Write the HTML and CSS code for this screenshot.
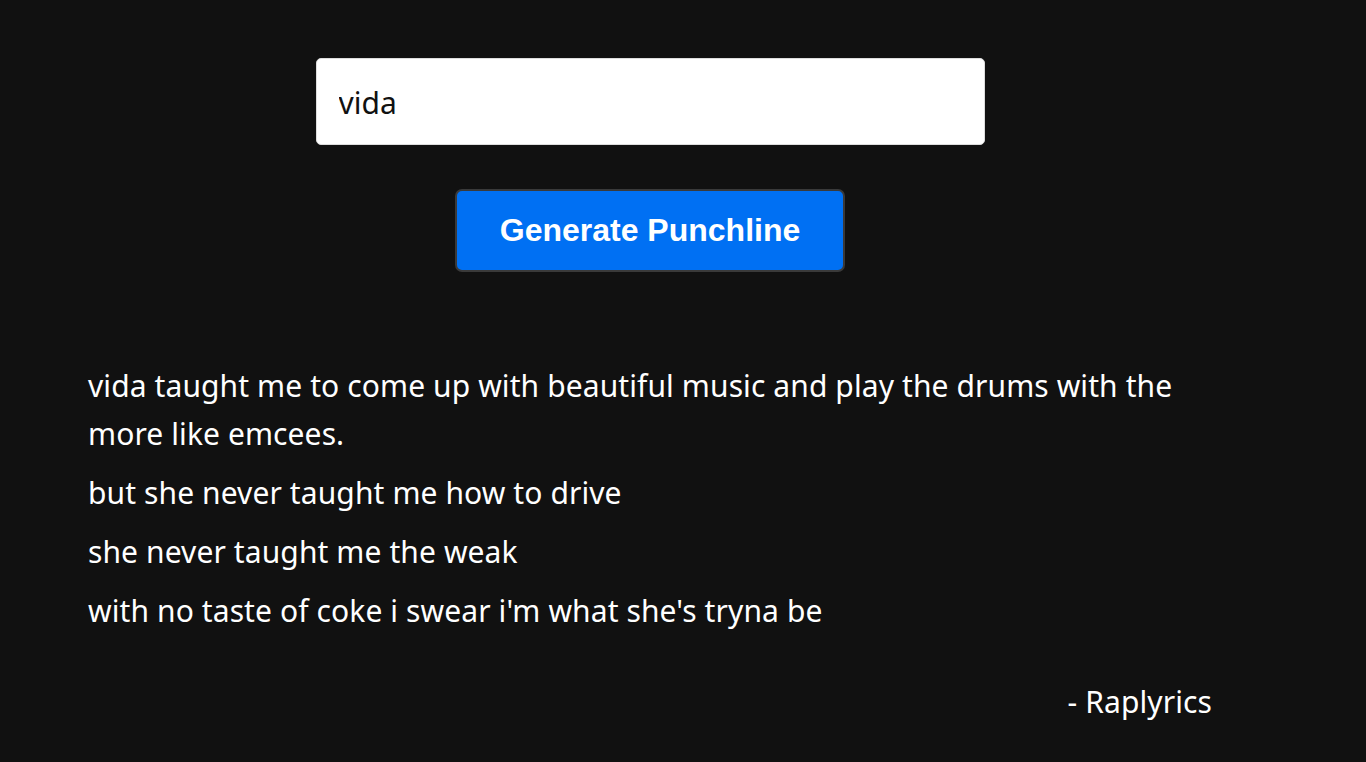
FILE: index.html
```html
<!DOCTYPE html>
<html lang="en">
<head>
<meta charset="utf-8">
<title>Punchline Generator</title>
<link rel="stylesheet" href="styles.css">
</head>
<body>
<main class="page">
  <form class="form">
    <input class="word-input" type="text" value="vida">
    <button class="generate-btn" type="button">Generate Punchline</button>
  </form>
  <section class="lyrics">
    <p class="line">vida taught me to come up with beautiful music and play the drums with the more like emcees.</p>
    <p class="line">but she never taught me how to drive</p>
    <p class="line">she never taught me the weak</p>
    <p class="line">with no taste of coke i swear i'm what she's tryna be</p>
    <p class="credit">- Raplyrics</p>
  </section>
</main>
</body>
</html>
```
FILE: styles.css
```css
html, body {
  margin: 0;
  padding: 0;
  background: #111111;
}
body {
  font-family: "Noto Sans", "Open Sans", sans-serif;
  color: #ffffff;
}
.page {
  width: 1124px;
  margin-left: 88px;
  padding-top: 58px;
}
.form {
  display: flex;
  flex-direction: column;
  align-items: center;
  gap: 44px;
  margin: 0;
}
.word-input {
  box-sizing: border-box;
  width: 669px;
  height: 87px;
  padding: 2px 22px 0 22px;
  border: 1px solid #dddddd;
  border-radius: 5px;
  background: #ffffff;
  color: #111111;
  font-family: "Noto Sans", "Open Sans", sans-serif;
  font-size: 30px;
  outline: none;
}
.generate-btn {
  box-sizing: border-box;
  width: 390px;
  height: 83px;
  padding: 0;
  border: 2px solid #3a3a3a;
  border-radius: 7px;
  background: #0070f3;
  color: #ffffff;
  font-family: "Liberation Sans", Arial, sans-serif;
  font-weight: 700;
  font-size: 32px;
  cursor: pointer;
}
.lyrics {
  margin-top: 90px;
  font-size: 30px;
  line-height: 48px;
  letter-spacing: 0.1px;
}
.line {
  margin: 0 0 11px 0;
}
.credit {
  margin: 43px 0 0 0;
  text-align: right;
}
```
